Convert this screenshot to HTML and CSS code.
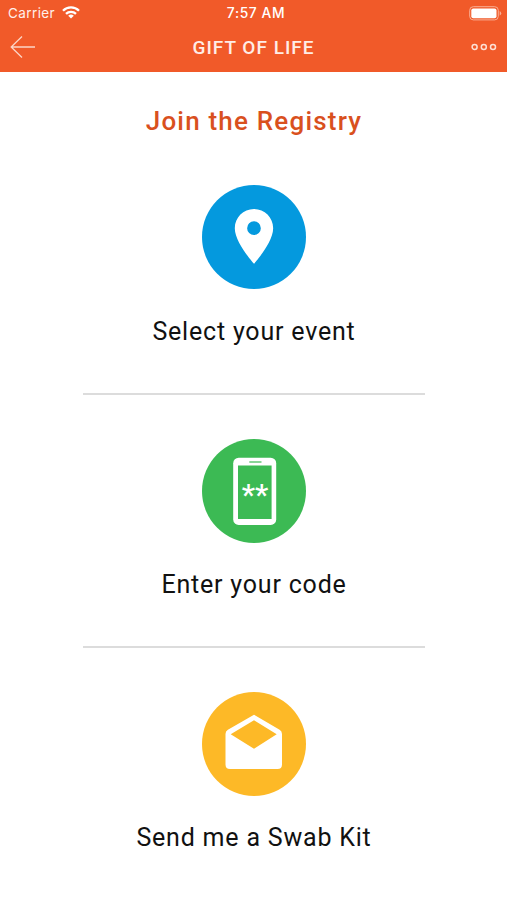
FILE: index.html
```html
<!DOCTYPE html>
<html lang="en">
<head>
<meta charset="utf-8">
<title>Gift of Life</title>
<link rel="stylesheet" href="styles.css">
</head>
<body>
<header class="header">
  <div class="status">
    <div class="carrier"><span>Carrier</span>
      <svg class="wifi" width="18" height="13" viewBox="0 0 18 13" fill="none" stroke="#fff" stroke-width="2.3"><path d="M1 4.7a11.3 11.3 0 0 1 16 0M4 7.9a7 7 0 0 1 10 0"/><path d="M9 12.4 6.2 9.8a4 4 0 0 1 5.6 0z" fill="#fff" stroke="none"/></svg>
    </div>
    <span class="time">7:57 AM</span>
    <svg class="battery" width="33" height="15" viewBox="0 0 33 15"><rect x=".7" y=".7" width="28.6" height="13.2" rx="3.6" fill="none" stroke="#f9ae94" stroke-width="1"/><rect x="2.3" y="2.4" width="25.2" height="9.8" rx="2" fill="#fff"/><path d="M30.7 5v4.6q1.5-.7 1.5-2.3t-1.5-2.3z" fill="#f9ae94"/></svg>
  </div>
  <nav class="nav">
    <svg class="back" width="26" height="24" viewBox="0 0 26 24" fill="none" stroke="#fcd5c6" stroke-width="1.3"><path d="M25 12H1.2M12 1.5 1.2 12 12 22.5"/></svg>
    <h1 class="title">GIFT OF LIFE</h1>
    <svg class="more" width="26" height="8" viewBox="0 0 26 8" fill="none" stroke="#fde0d5" stroke-width="1.5"><circle cx="3.6" cy="4" r="2.5"/><circle cx="12.8" cy="4" r="2.5"/><circle cx="22" cy="4" r="2.5"/></svg>
  </nav>
</header>
<main class="content">
  <h2 class="heading">Join the Registry</h2>
  <section class="option">
    <svg class="icon" viewBox="0 0 104 104"><circle cx="52" cy="52" r="52" fill="#0499de"/><path transform="translate(19.1 18.5) scale(2.74)" fill="#fff" fill-rule="evenodd" d="M12 2C8.13 2 5 5.13 5 9c0 5.25 7 13 7 13s7-7.75 7-13c0-3.87-3.13-7-7-7zm0 9.5a2.5 2.5 0 0 1 0-5 2.5 2.5 0 0 1 0 5z"/></svg>
    <span class="label">Select your event</span>
  </section>
  <section class="option">
    <svg class="icon" viewBox="0 0 104 104"><circle cx="52" cy="52" r="52" fill="#3cba54"/><rect x="31.2" y="18.7" width="43" height="67.2" rx="5.5" fill="#fff"/><path d="M36 26.5h33.6v53.6H36z" fill="#3cba54"/><path d="M47.3 23h12.2" stroke="#3cba54" stroke-width="1.2"/><text class="stars" x="53" y="66" text-anchor="middle">**</text></svg>
    <span class="label">Enter your code</span>
  </section>
  <section class="option">
    <svg class="icon" viewBox="0 0 104 104"><circle cx="52" cy="52" r="52" fill="#fdb927"/><path fill="#fff" fill-rule="evenodd" d="M52 22.7 77.6 37.7Q80 39.2 80 42v30.5q0 4.5-4.5 4.5h-47.500q-4.500 0-4.500-4.500V42q0-2.800 2.400-4.300zM52 28.300 28.700 42.300 52 56.700 74.700 42.300z"/></svg>
    <span class="label">Send me a Swab Kit</span>
  </section>
</main>
</body>
</html>
```
FILE: styles.css
```css
* { box-sizing: border-box; }

body {
  margin: 0;
  background: #fff;
  font-family: Roboto, "Liberation Sans", sans-serif;
}

svg { display: block; }

.header {
  height: 71.5px;
  background: #f15a29;
  color: #fff;
}

.status {
  display: grid;
  grid-template-columns: 1fr auto 1fr;
  align-items: center;
  height: 27px;
  padding: 0 5px 0 8px;
  font-family: Inter, sans-serif;
  font-size: 13.5px;
  line-height: 27px;
}

.carrier {
  display: flex;
  align-items: center;
  gap: 7px;
  color: #fff0ea;
  letter-spacing: .4px;
}

.wifi { margin-bottom: 2px; }

.time {
  font-size: 13.8px;
  font-weight: 500;
  letter-spacing: .6px;
  padding-left: 2px;
}

.battery { justify-self: end; }

.nav {
  display: grid;
  grid-template-columns: 1fr auto 1fr;
  align-items: center;
  height: 40px;
  padding: 0 10px;
}

.back { margin-bottom: 1px; }

.title {
  margin: 0;
  padding-top: 1px;
  color: #ffede6;
  font-size: 19px;
  font-weight: 500;
  letter-spacing: 1px;
  line-height: 39px;
}

.more { justify-self: end; }

.content {
  display: flex;
  flex-direction: column;
  align-items: center;
}

.heading {
  margin: 32px 0 1px;
  padding-left: 1px;
  color: #d9501e;
  font-size: 26px;
  font-weight: 500;
  letter-spacing: 1.2px;
  line-height: 34px;
}

.option {
  display: flex;
  flex-direction: column;
  align-items: center;
  width: 342px;
  height: 253.4px;
  padding-top: 44px;
  border-bottom: 2px solid #dcdcdc;
}

.option:first-of-type {
  height: 256px;
  padding-top: 46.5px;
}

.option:last-child { border-bottom: 0; }

.icon {
  flex: none;
  width: 104px;
  height: 104px;
}

.stars {
  fill: #fff;
  font-size: 30px;
  font-weight: 500;
}

.label {
  margin-top: 25.3px;
  padding-left: 1px;
  color: #111;
  font-size: 25px;
  letter-spacing: .8px;
  line-height: 34px;
  white-space: nowrap;
}

.option:first-of-type .label { margin-top: 25.6px; }
```
